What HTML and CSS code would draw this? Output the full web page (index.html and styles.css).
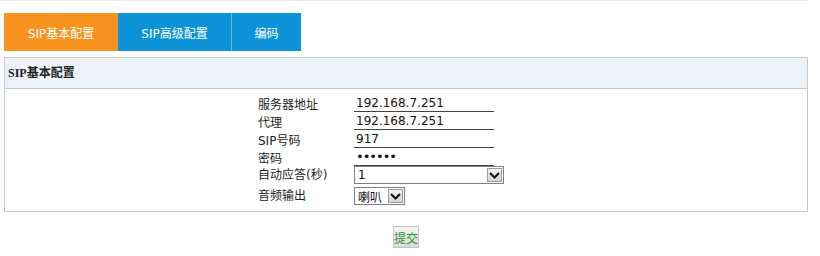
FILE: index.html
```html
<!DOCTYPE html>
<html>
<head>
<meta charset="utf-8">
<link rel="stylesheet" href="styles.css">
</head>
<body>
<div class="page">
  <div class="tabs">
    <div class="tab tab-active">SIP基本配置</div>
    <div class="tab tab-mid">SIP高级配置</div>
    <div class="tab tab-last">编码</div>
  </div>
  <div class="panel">
    <div class="panel-head">SIP基本配置</div>
    <div class="panel-body">
      <div class="form">
        <div class="row"><span class="label">服务器地址</span><input class="field" type="text" value="192.168.7.251"></div>
        <div class="row"><span class="label">代理</span><input class="field" type="text" value="192.168.7.251"></div>
        <div class="row"><span class="label">SIP号码</span><input class="field" type="text" value="917"></div>
        <div class="row"><span class="label">密码</span><input class="field field-pass" type="password" value="123456"></div>
        <div class="row row-sel"><span class="label">自动应答(秒)</span>
          <span class="sel sel-wide"><span class="sel-text">1</span><span class="arrow"><svg width="11" height="7" viewBox="0 0 11 7"><path d="M1 1 L5.5 5.5 L10 1" fill="none" stroke="#111" stroke-width="2"/></svg></span></span>
        </div>
        <div class="row row-sel2"><span class="label">音频输出</span>
          <span class="sel sel-small"><span class="sel-text">喇叭</span><span class="arrow"><svg width="11" height="7" viewBox="0 0 11 7"><path d="M1 1 L5.5 5.5 L10 1" fill="none" stroke="#111" stroke-width="2"/></svg></span></span>
        </div>
      </div>
    </div>
  </div>
  <div class="actions"><button class="submit" type="button">提交</button></div>
</div>
</body>
</html>
```

FILE: styles.css
```css
html, body {
  margin: 0;
  padding: 0;
  background: #ffffff;
}
body {
  font-family: "DejaVu Sans", "Noto Sans CJK SC", sans-serif;
  font-size: 12px;
  color: #222;
}
.page {
  border-top: 1px solid #ececec;
  padding: 12px 0 0 4px;
  width: 804px;
}
.tabs {
  display: flex;
  height: 38px;
}
.tab {
  display: flex;
  align-items: center;
  justify-content: center;
  color: #ffffff;
  font-size: 12px;
  font-family: "DejaVu Sans", "Noto Sans CJK SC", sans-serif;
}
.tab-active {
  width: 114px;
  background: #f7931e;
}
.tab-mid {
  width: 113px;
  background: #0d93d7;
  border-right: 1px solid #6ab8e4;
}
.tab-last {
  width: 69px;
  background: #0d93d7;
}
.panel {
  margin-top: 6px;
  border: 1px solid #c8c8c8;
}
.panel-head {
  height: 30px;
  line-height: 30px;
  background: #edf2f8;
  border-bottom: 1px solid #c8c8c8;
  padding-left: 3px;
  font-weight: bold;
  font-size: 12px;
  color: #222;
  font-family: "Liberation Serif", "Noto Sans CJK SC", serif;
}
.panel-body {
  padding: 5px 0 6px 253px;
}
.form {
  display: flex;
  flex-direction: column;
}
.row {
  display: flex;
  align-items: center;
  height: 18px;
}
.label {
  width: 96px;
  color: #222;
}
.field {
  width: 140px;
  height: 17px;
  box-sizing: border-box;
  border: none;
  border-bottom: 1px solid #444;
  padding: 0 2px;
  margin: 0;
  font-family: "DejaVu Sans", "Noto Sans CJK SC", sans-serif;
  font-size: 12px;
  color: #111;
  outline: none;
  background: transparent;
}
.field-pass {
  font-size: 13px;
  letter-spacing: -1px;
}
.row-sel {
  height: 21px;
  align-items: flex-start;
}
.row-sel2 {
  height: 18px;
  align-items: flex-start;
}
.row-sel .label,
.row-sel2 .label {
  line-height: 18px;
}
.sel {
  position: relative;
  display: flex;
  align-items: center;
  height: 18px;
  box-sizing: border-box;
  border: 1px solid #7f7f7f;
  background: #fff;
  font-size: 12px;
  color: #111;
}
.sel-wide {
  width: 150px;
}
.sel-small {
  width: 51px;
}
.sel-text {
  padding-left: 3px;
}
.arrow {
  position: absolute;
  right: 1px;
  top: 1px;
  width: 15px;
  height: 14px;
  box-sizing: border-box;
  border: 1px solid #9a9a9a;
  background: linear-gradient(#f2f2f2, #d6d6d6);
  display: flex;
  align-items: center;
  justify-content: center;
}
.actions {
  display: flex;
  justify-content: center;
  margin-top: 14px;
}
.submit {
  width: 26px;
  height: 22px;
  padding: 0;
  margin: 0;
  border: 1px solid #c4c4c4;
  background: linear-gradient(#f4f4f4, #d9d9d9);
  color: #2d9a2d;
  font-size: 12px;
  font-family: "DejaVu Sans", "Noto Sans CJK SC", sans-serif;
}
```
